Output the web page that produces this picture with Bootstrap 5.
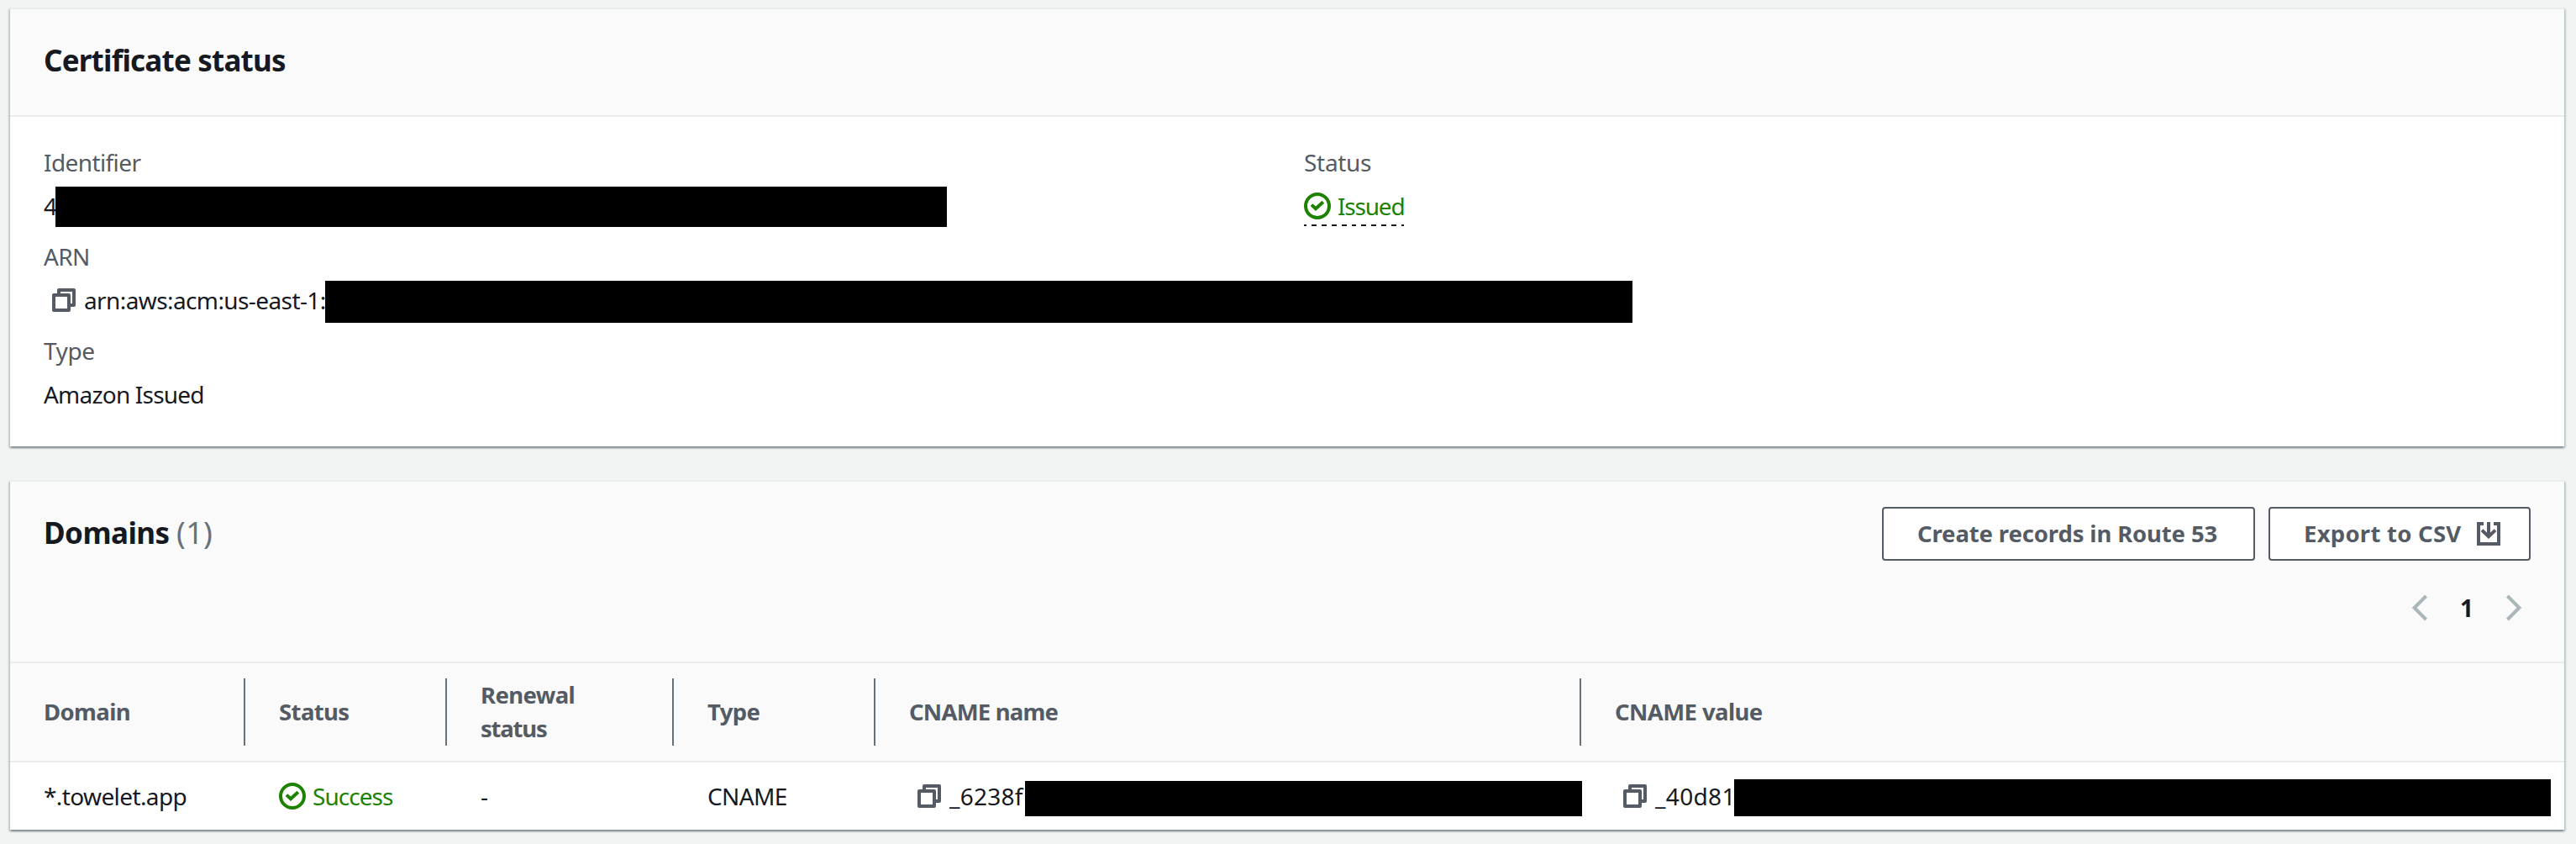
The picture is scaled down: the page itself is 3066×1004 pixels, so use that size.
<!doctype html>
<html lang="en">
<head>
<meta charset="utf-8">
<meta name="viewport" content="width=device-width, initial-scale=1">
<title>Certificate status</title>
<link href="https://cdn.jsdelivr.net/npm/bootstrap@5.3.0/dist/css/bootstrap.min.css" rel="stylesheet">
<style>
body{background:#f2f4f4;color:#16191f;font-family:"Noto Sans","Open Sans",sans-serif;font-size:28px;line-height:44px;padding:9px 14px 0 12px;min-height:100vh}
.panel{background:#fff;border-top:2px solid #eaeded;box-shadow:0 2px 2px 0 rgba(0,28,36,.3),2px 2px 2px 0 rgba(0,28,36,.15),-2px 2px 2px 0 rgba(0,28,36,.15)}
.panel + .panel{margin-top:40px}
.panel-head{background:#fafafa;border-bottom:2px solid #eaeded;padding:30px 40px 0}
.head-short{height:128px}
.head-tall{height:216px}
.panel-title{font-size:35px;font-weight:700;line-height:44px;margin:9px 0 0;white-space:pre;letter-spacing:-.8px}
.panel-title .t3{letter-spacing:-.55px}
.panel-title .counter{font-size:36px;font-weight:400;color:#687078;letter-spacing:.3px}
.details{padding:32px 40px 40px}
.details .col-half{width:1500px}
.item{height:96px;margin-bottom:16px}
.item:last-child{margin-bottom:0}
.item-label{color:#545b64;margin-bottom:8px;height:44px}
.item-value,.cell-value{display:flex;align-items:flex-start;height:44px;white-space:nowrap}
.ico{width:32px;height:32px;flex:none;fill:none;stroke:currentColor;stroke-width:2}
.ico-line{margin-top:6px}
.ico-copy{color:#545b64;margin:6px 8px 0 8px;stroke-linejoin:round}
.ok{color:#1d8102}
.ok .ico{margin-right:8px}
.ok-dashed{width:119px;height:46px;background:repeating-linear-gradient(90deg,#16191f 0 3px,transparent 3px 8.9px,#16191f 8.9px 11.9px) bottom/100% 2px no-repeat}
.lead-text{flex:none}
.redact{background:#000;flex:none}
.btn-outline{display:flex;align-items:center;justify-content:space-between;height:64px;border:2px solid #545b64;border-radius:4px;background:#fff;color:#545b64;font-size:27.5px;font-weight:700;line-height:44px;padding:0 32px 0 40px;white-space:nowrap}
.pager{color:#aab7b8;height:44px;margin-top:34px;padding-right:3px}
.pager b{color:#16191f;width:82px;text-align:center}
.chev{width:32px;height:32px;fill:none;stroke:currentColor;stroke-width:2}
.grid{table-layout:fixed;width:100%;border-collapse:separate;border-spacing:0}
.grid th{background:#fafafa;border-bottom:2px solid #eaeded;height:118px;padding:18px 0;color:#545b64;font-size:27.5px;font-weight:700;line-height:40px}
.th-in{height:80px;padding-left:40px;display:flex;align-items:center}
.th-line{border-right:2px solid #687078}
.grid td{height:80px;padding:18px 0 0 40px;vertical-align:top}
.t0{letter-spacing:-.14px}.t1{letter-spacing:-.3px}.t2{letter-spacing:-.43px}.t3{letter-spacing:-.6px}.t4{letter-spacing:-.8px}.t5{letter-spacing:-.95px}.t6{letter-spacing:-1.2px}
.w0{letter-spacing:.25px}.w1{letter-spacing:.35px}.w2{letter-spacing:.8px}
</style>
<script src="https://cdn.jsdelivr.net/npm/bootstrap@5.3.0/dist/js/bootstrap.bundle.min.js"></script>
</head>
<body>
<svg class="d-none">
  <symbol id="i-copy" viewBox="0 0 16 16"><path d="M2 5h9v9H2zM5 5V2h9v9h-3"/></symbol>
  <symbol id="i-ok" viewBox="0 0 16 16"><circle cx="8" cy="8" r="7"/><path d="M4.5 7.3L7 9.6l4.4-4"/></symbol>
  <symbol id="i-export" viewBox="0 0 16 16"><path d="M5 2H2v12h12V2h-3M8 1v9M4 5.8l4 3.8 4-3.8"/></symbol>
</svg>

<section class="panel">
  <header class="panel-head head-short"><h2 class="panel-title">Certificate status</h2></header>
  <div class="details d-flex">
    <div class="col-half">
      <div class="item">
        <div class="item-label t3">Identifier</div>
        <div class="item-value"><span class="lead-text" style="width:14px">4</span><span class="redact" style="width:1061px;height:48px;margin-top:-1px"></span></div>
      </div>
      <div class="item">
        <div class="item-label t3">ARN</div>
        <div class="item-value"><svg class="ico ico-copy"><use href="#i-copy"/></svg><span class="lead-text t3" style="width:287px">arn:aws:acm:us-east-1:</span><span class="redact" style="width:1556px;height:50px;margin-top:-1px"></span></div>
      </div>
      <div class="item">
        <div class="item-label t2">Type</div>
        <div class="item-value t4">Amazon Issued</div>
      </div>
    </div>
    <div>
      <div class="item-label t1">Status</div>
      <div class="item-value ok ok-dashed"><svg class="ico ico-line"><use href="#i-ok"/></svg><span class="t6">Issued</span></div>
    </div>
  </div>
</section>

<section class="panel">
  <header class="panel-head head-tall">
    <div class="d-flex justify-content-between align-items-start">
      <h2 class="panel-title"><span class="t3">Domains </span><span class="counter">(1)</span></h2>
      <div class="d-flex gap-3">
        <button class="btn-outline" style="width:444px"><span class="t0">Create records in Route 53</span></button>
        <button class="btn-outline" style="width:312px"><span class="w0">Export to CSV</span><svg class="ico"><use href="#i-export"/></svg></button>
      </div>
    </div>
    <div class="pager d-flex justify-content-end align-items-center">
      <svg class="chev" viewBox="0 0 16 16"><path d="M12.3 1L5.3 8l7 7"/></svg>
      <b>1</b>
      <svg class="chev" viewBox="0 0 16 16"><path d="M3.7 1l7 7-7 7"/></svg>
    </div>
  </header>
  <table class="grid">
    <colgroup><col style="width:280px"><col style="width:240px"><col style="width:270px"><col style="width:240px"><col style="width:840px"><col></colgroup>
    <thead>
      <tr>
        <th><div class="th-in th-line t3">Domain</div></th>
        <th><div class="th-in th-line t3">Status</div></th>
        <th><div class="th-in th-line"><span><span class="t3">Renewal</span><br><span class="t6">status</span></span></div></th>
        <th><div class="th-in th-line t3">Type</div></th>
        <th><div class="th-in th-line t4">CNAME name</div></th>
        <th><div class="th-in t3">CNAME value</div></th>
      </tr>
    </thead>
    <tbody>
      <tr>
        <td><div class="cell-value t3">*.towelet.app</div></td>
        <td><div class="cell-value ok"><svg class="ico ico-line"><use href="#i-ok"/></svg><span class="t5">Success</span></div></td>
        <td><div class="cell-value">-</div></td>
        <td><div class="cell-value t3">CNAME</div></td>
        <td><div class="cell-value"><svg class="ico ico-copy"><use href="#i-copy"/></svg><span class="lead-text w0" style="width:90px">_6238f</span><span class="redact" style="width:663px;height:42px;margin-top:4px"></span></div></td>
        <td><div class="cell-value"><svg class="ico ico-copy"><use href="#i-copy"/></svg><span class="lead-text w1" style="width:94px">_40d81</span><span class="redact" style="width:972px;height:44px;margin-top:2px"></span></div></td>
      </tr>
    </tbody>
  </table>
</section>
</body>
</html>
